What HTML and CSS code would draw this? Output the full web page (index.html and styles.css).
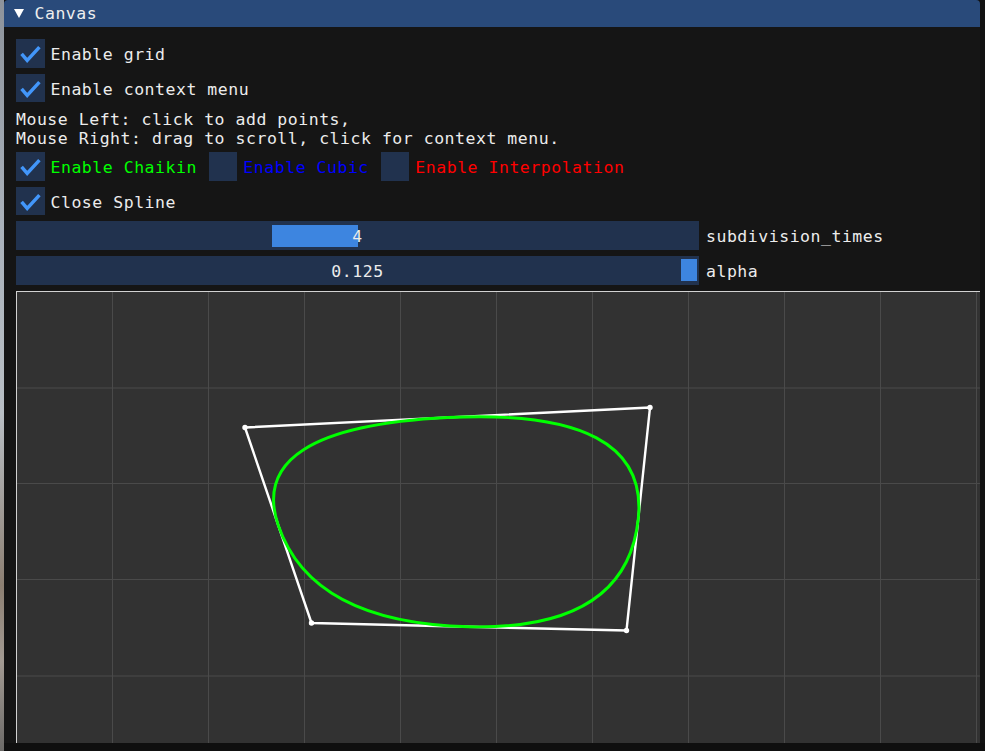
FILE: index.html
```html
<!DOCTYPE html>
<html>
<head>
<meta charset="utf-8">
<link rel="stylesheet" href="styles.css">
</head>
<body>
<div class="desk">
  <div class="photo"></div>
  <div class="window">
    <div class="titlebar"><span class="arrow"></span><span class="title">Canvas</span></div>
    <div class="content">
      <div class="row">
        <div class="check"><span class="box"><svg class="tick" viewBox="0 0 28 28"><polyline points="5.5,14.5 11,21 23,8"/></svg></span><span class="txt">Enable grid</span></div>
      </div>
      <div class="row">
        <div class="check"><span class="box"><svg class="tick" viewBox="0 0 28 28"><polyline points="5.5,14.5 11,21 23,8"/></svg></span><span class="txt">Enable context menu</span></div>
      </div>
      <div class="help">Mouse Left: click to add points,<br>Mouse Right: drag to scroll, click for context menu.</div>
      <div class="row">
        <div class="check"><span class="box"><svg class="tick" viewBox="0 0 28 28"><polyline points="5.5,14.5 11,21 23,8"/></svg></span><span class="txt green">Enable Chaikin</span></div>
        <div class="check"><span class="box"></span><span class="txt blue">Enable Cubic</span></div>
        <div class="check"><span class="box"></span><span class="txt red">Enable Interpolation</span></div>
      </div>
      <div class="row">
        <div class="check"><span class="box"><svg class="tick" viewBox="0 0 28 28"><polyline points="5.5,14.5 11,21 23,8"/></svg></span><span class="txt">Close Spline</span></div>
      </div>
      <div class="row">
        <div class="slider"><div class="grab" style="margin-left:256px;width:86px"></div><span class="val">4</span></div>
        <span class="txt lbl">subdivision_times</span>
      </div>
      <div class="row">
        <div class="slider"><div class="grab" style="margin-left:665px;width:16px"></div><span class="val">0.125</span></div>
        <span class="txt lbl">alpha</span>
      </div>
      <div class="canvas">
        <svg class="plot" width="964" height="460">
          <g class="grid">
            <line x1="96.5" y1="0" x2="96.5" y2="460"/>
            <line x1="192.5" y1="0" x2="192.5" y2="460"/>
            <line x1="288.5" y1="0" x2="288.5" y2="460"/>
            <line x1="384.5" y1="0" x2="384.5" y2="460"/>
            <line x1="480.5" y1="0" x2="480.5" y2="460"/>
            <line x1="576.5" y1="0" x2="576.5" y2="460"/>
            <line x1="672.5" y1="0" x2="672.5" y2="460"/>
            <line x1="768.5" y1="0" x2="768.5" y2="460"/>
            <line x1="864.5" y1="0" x2="864.5" y2="460"/>
            <line x1="960.5" y1="0" x2="960.5" y2="460"/>
            <line x1="0" y1="97" x2="964" y2="97"/>
            <line x1="0" y1="192.5" x2="964" y2="192.5"/>
            <line x1="0" y1="288.5" x2="964" y2="288.5"/>
            <line x1="0" y1="385" x2="964" y2="385"/>
          </g>
          <line class="edge" x1="0" y1="0.5" x2="964" y2="0.5"/>
          <line class="edge" x1="0.5" y1="0" x2="0.5" y2="460"/>
          <polygon class="poly" points="229,136.5 634,116.5 610.5,339.5 295.5,332"/>
          <path class="curve" d="M262.25,234.25 Q229,136.5 431.5,126.5 Q634,116.5 622.25,228 Q610.5,339.5 453,335.75 Q295.5,332 262.25,234.25 Z"/>
          <circle class="pt" cx="229" cy="136.5" r="2.7"/>
          <circle class="pt" cx="634" cy="116.5" r="2.7"/>
          <circle class="pt" cx="610.5" cy="339.5" r="2.7"/>
          <circle class="pt" cx="295.5" cy="332" r="2.7"/>
        </svg>
      </div>
    </div>
  </div>
  <div class="rightgap"></div>
</div>
</body>
</html>
```
FILE: styles.css
```css
html, body {
  margin: 0;
  padding: 0;
  background: #0f0f0f;
}
body {
  width: 985px;
  height: 751px;
  overflow: hidden;
}
.desk {
  display: flex;
  height: 743px;
}
.photo {
  width: 4px;
  height: 751px;
  flex: none;
  background: linear-gradient(180deg, #8d939b 0%, #aab2bb 30%, #b8bec4 55%, #8c7f72 78%, #a29a92 88%, #6c6a68 100%);
}
.window {
  width: 976px;
  height: 743px;
  flex: none;
  display: flex;
  flex-direction: column;
  background: #151515;
  border-radius: 4px 4px 0 0;
  overflow: hidden;
  font-family: "DejaVu Sans Mono", "Liberation Mono", monospace;
  font-size: 16.5px;
  letter-spacing: 0.52px;
  line-height: 19px;
  color: #ececec;
}
.rightgap {
  flex: 1;
  background: #121212;
}
.titlebar {
  height: 27px;
  flex: none;
  display: flex;
  align-items: center;
  padding-left: 9.5px;
  background: #294a7a;
}
.arrow {
  width: 0;
  height: 0;
  border-left: 5.75px solid transparent;
  border-right: 5.75px solid transparent;
  border-top: 9.5px solid #ffffff;
  margin-top: 0.5px;
}
.title {
  margin-left: 11px;
  color: #eeeeee;
}
.content {
  flex: 1;
  display: flex;
  flex-direction: column;
  gap: 6.1px;
  padding: 12px 0 0 12px;
  min-height: 0;
}
.row {
  height: 28.5px;
  flex: none;
  display: flex;
  align-items: center;
  gap: 12px;
}
.check {
  display: flex;
  align-items: center;
  gap: 6px;
  height: 28.5px;
}
.box {
  width: 28.5px;
  height: 28.5px;
  background: #21324e;
  display: block;
  flex: none;
}
.tick {
  width: 28.5px;
  height: 28.5px;
  display: block;
}
.tick polyline {
  fill: none;
  stroke: #4296fa;
  stroke-width: 3.4;
  stroke-linecap: butt;
  stroke-linejoin: miter;
}
.txt {
  white-space: pre;
  padding-top: 2.5px;
}
.green { color: #00ff00; }
.blue { color: #0000ff; }
.red { color: #ff0000; }
.help {
  height: 38px;
  flex: none;
  box-sizing: border-box;
  padding-top: 2px;
  white-space: pre;
}
.slider {
  width: 683px;
  height: 28.5px;
  flex: none;
  display: grid;
  background: #21324e;
}
.slider > * {
  grid-area: 1 / 1;
}
.grab {
  height: 22px;
  align-self: center;
  background: #3d85e0;
}
.val {
  align-self: center;
  text-align: center;
  padding-top: 2.5px;
}
.lbl {
  margin-left: -5px;
}
.canvas {
  flex: 1;
  min-height: 0;
  overflow: hidden;
  background: #323232;
}
.plot {
  display: block;
}
.grid line {
  stroke: #4a4a4a;
  stroke-width: 1;
}
.edge {
  stroke: #d2d2d2;
  stroke-width: 1;
}
.poly {
  fill: none;
  stroke: #ffffff;
  stroke-width: 2.4;
  stroke-linejoin: round;
}
.curve {
  fill: none;
  stroke: #00ff00;
  stroke-width: 2.9;
}
.pt {
  fill: #ffffff;
}
```
